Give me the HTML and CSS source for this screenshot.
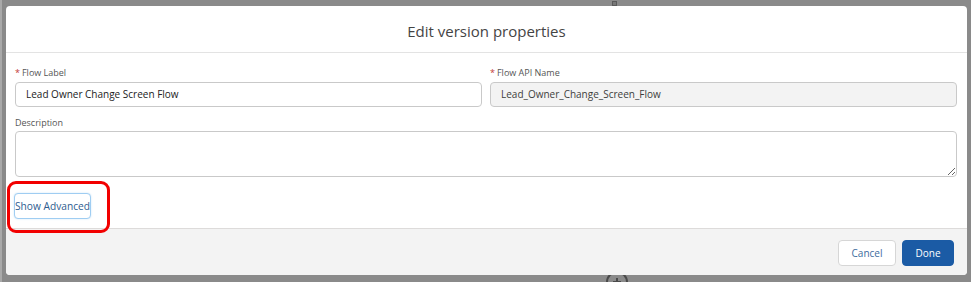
FILE: index.html
```html
<!DOCTYPE html>
<html lang="en">
<head>
<meta charset="utf-8">
<title>Edit version properties</title>
<link rel="stylesheet" href="styles.css">
</head>
<body>
<div class="frame">
  <span class="canvas-mark"></span>
  <span class="canvas-node"><span class="plus-h"></span><span class="plus-v"></span></span>
  <div class="modal">
    <header class="modal-header">
      <h2 class="modal-title">Edit version properties</h2>
    </header>
    <div class="modal-body">
      <div class="field-row">
        <div class="field">
          <label class="field-label"><abbr class="req">*</abbr>Flow Label</label>
          <div class="input">Lead Owner Change Screen Flow</div>
        </div>
        <div class="field">
          <label class="field-label"><abbr class="req">*</abbr>Flow API Name</label>
          <div class="input input-readonly">Lead_Owner_Change_Screen_Flow</div>
        </div>
      </div>
      <div class="field field-desc">
        <label class="field-label">Description</label>
        <textarea class="textarea"></textarea>
      </div>
      <div class="advanced-row">
        <button class="btn btn-advanced">Show Advanced</button>
      </div>
    </div>
    <footer class="modal-footer">
      <button class="btn btn-neutral">Cancel</button>
      <button class="btn btn-brand">Done</button>
    </footer>
  </div>
</div>
<div class="annotation"></div>
</body>
</html>
```

FILE: styles.css
```css
* { box-sizing: border-box; }
html, body { margin: 0; padding: 0; background: #fff; }
body {
  font-family: "Open Sans", "Noto Sans", sans-serif;
  color: #3e3e3c;
  width: 975px;
  height: 288px;
  overflow: hidden;
  position: relative;
}
.frame {
  position: relative;
  width: 971px;
  height: 282px;
  background: #8a8a8a;
  border-left: 2px solid #a9a9a9;
  padding: 6px 4px 7px 4px;
  overflow: hidden;
}
.canvas-mark {
  position: absolute;
  left: 610px;
  top: 1px;
  width: 5px;
  height: 5px;
  border: 1px solid #5a5a5a;
  background: #777;
}
.canvas-node {
  position: absolute;
  left: 604px;
  top: 271px;
  width: 22px;
  height: 22px;
  border: 2px solid #4a4a4a;
  border-radius: 50%;
}
.plus-h, .plus-v {
  position: absolute;
  background: #4a4a4a;
}
.plus-h { left: 5px; top: 8px; width: 8px; height: 2px; }
.plus-v { left: 8px; top: 5px; width: 2px; height: 8px; }
.modal {
  position: relative;
  z-index: 1;
  height: 269px;
  background: #fff;
  border-radius: 4px;
  display: flex;
  flex-direction: column;
  overflow: hidden;
}
.modal-header {
  height: 47px;
  border-bottom: 1px solid #e3e3e3;
  display: flex;
  align-items: center;
  justify-content: center;
}
.modal-title {
  margin: 0;
  font-weight: 400;
  font-size: 15px;
  color: #444;
  padding-top: 4px;
}
.modal-body {
  flex: 1;
  padding: 13px 10px 0 9px;
}
.field-row {
  display: grid;
  grid-template-columns: 1fr 1fr;
  column-gap: 8px;
}
.field-label {
  display: block;
  height: 14px;
  line-height: 14px;
  font-size: 9px;
  color: #555;
  margin-bottom: 2px;
}
.req {
  color: #c23934;
  text-decoration: none;
  border: 0;
  margin-right: 2px;
}
.input {
  height: 25px;
  border: 1px solid #c9c9c9;
  border-radius: 4px;
  padding: 0 10px;
  font-size: 10px;
  line-height: 23px;
  color: #222;
  background: #fff;
}
.input-readonly {
  background: #f3f3f3;
  color: #3e3e3c;
}
.field-desc { margin-top: 9px; }
.field-desc .field-label { margin-bottom: 1px; }
.textarea {
  display: block;
  width: 100%;
  height: 46px;
  border: 1px solid #c9c9c9;
  border-radius: 4px;
  resize: vertical;
  font-family: inherit;
  margin: 0;
}
.advanced-row {
  margin-top: 16px;
}
.btn {
  font-family: inherit;
  height: 26px;
  border-radius: 4px;
  font-size: 10px;
  padding: 0;
  white-space: nowrap;
  cursor: pointer;
}
.btn-advanced {
  margin-left: -1px;
  width: 77px;
  background: #fff;
  border: 1px solid #9fcdf2;
  box-shadow: 0 0 2px #c9e3f8;
  color: #2e5c8f;
  font-size: 10.2px;
}
.modal-footer {
  height: 47px;
  border-top: 1px solid #dddbda;
  background: #f3f3f3;
  display: flex;
  justify-content: flex-end;
  align-items: flex-start;
  gap: 6px;
  padding: 11px 13px 0 0;
}
.btn-neutral {
  width: 58px;
  background: #fff;
  border: 1px solid #d6d6d6;
  color: #3d6c9e;
}
.btn-brand {
  width: 52px;
  background: #1b5ba5;
  border: 1px solid #1b5ba5;
  color: #fff;
}
.annotation {
  position: absolute;
  left: 7px;
  top: 181px;
  width: 103px;
  height: 52px;
  border: 3px solid #f20000;
  border-radius: 9px;
  z-index: 5;
}
```
